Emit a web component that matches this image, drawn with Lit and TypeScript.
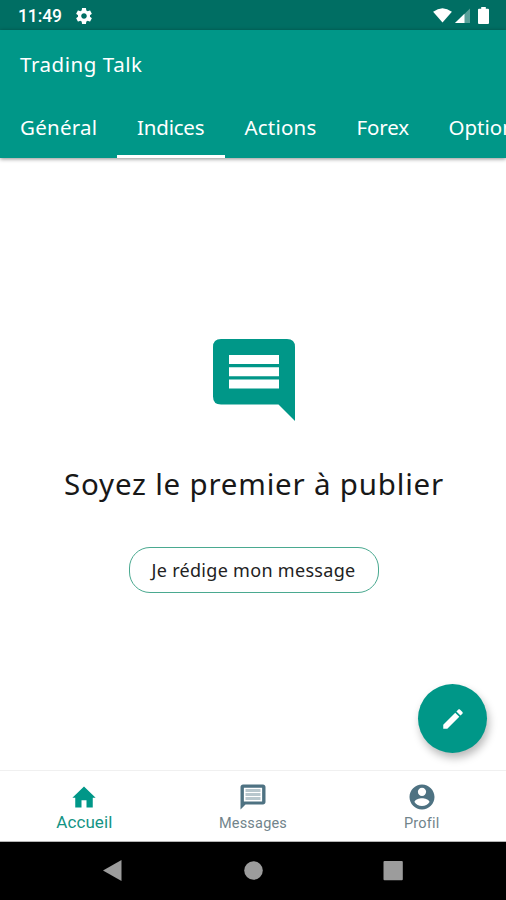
import { LitElement, html, css, svg } from "lit";
import { customElement, property, state } from "lit/decorators.js";
import { classMap } from "lit/directives/class-map.js";

@customElement("status-bar")
class StatusBar extends LitElement {
  static styles = css`
    :host { display: flex; align-items: center; height: 30px; box-sizing: border-box; padding: 1px 17px 0 18px; background: #006e63; color: #fff; font: 500 17.5px/28px Roboto, sans-serif; }
    .time { width: 58px; letter-spacing: -0.1px; }
    .fill { flex: 1; }
    svg { display: block; fill: #fff; }
    .gear { width: 16px; height: 16px; }
    .wifi { margin-right: 3px; }
    .signal { margin-right: 8px; }
  `;
  render() {
    return html`
      <span class="time">11:49</span>
      <svg class="gear" viewBox="2 2 20 20"><path d="M19.43 12.98c.04-.32.07-.64.07-.98s-.03-.66-.07-.98l2.11-1.65c.19-.15.24-.42.12-.64l-2-3.46c-.12-.22-.39-.3-.61-.22l-2.49 1c-.52-.4-1.08-.73-1.69-.98l-.38-2.65C14.46 2.18 14.25 2 14 2h-4c-.25 0-.46.18-.49.42l-.38 2.65c-.61.25-1.17.59-1.69.98l-2.49-1c-.23-.09-.49 0-.61.22l-2 3.46c-.13.22-.07.49.12.64l2.11 1.65c-.04.32-.07.65-.07.98s.03.66.07.98l-2.11 1.65c-.19.15-.24.42-.12.64l2 3.46c.12.22.39.3.61.22l2.49-1c.52.4 1.08.73 1.69.98l.38 2.65c.03.24.24.42.49.42h4c.25 0 .46-.18.49-.42l.38-2.65c.61-.25 1.17-.59 1.69-.98l2.49 1c.23.09.49 0 .61-.22l2-3.46c.12-.22.07-.49-.12-.64l-2.11-1.65zM12 15.500c-1.930 0-3.500-1.570-3.500-3.500s1.570-3.500 3.500-3.500 3.500 1.570 3.500 3.500-1.570 3.500-3.500 3.500z"/></svg>
      <span class="fill"></span>
      <svg class="wifi" width="19" height="15" viewBox="0 0 20 16"><path d="M0 4Q10-3.500 20 4L10 15.500Z"/></svg>
      <svg class="signal" width="15" height="15" viewBox="0 0 15 16" preserveAspectRatio="none"><path opacity=".35" d="M0 16 15 .5V16Z"/><path d="M0 16 9.500 6.200V16Z"/></svg>
      <svg width="11" height="17" viewBox="0 0 11 17"><path d="M3.200 0h4.600v1.800H10q1 0 1 1V16q0 1-1 1H1q-1 0-1-1V2.800q0-1 1-1h2.200Z"/></svg>
    `;
  }
}

@customElement("nav-item")
class NavItem extends LitElement {
  @property() icon = "home";
  @property() label = "";
  @property({ type: Boolean }) active = false;
  static styles = css`
    :host { flex: 1; }
    .item { display: flex; flex-direction: column; align-items: center; padding-top: 11px; color: #71848b; font: 400 14.5px/18px Roboto, sans-serif; letter-spacing: 0.2px; }
    .icon { display: block; width: 30px; height: 30px; fill: #4e7282; }
    .label { margin-top: 3px; }
    .active { color: #139484; font-size: 17px; letter-spacing: 0.1px; }
    .active .label { margin-top: 1px; }
    .active .icon { fill: #009788; }
  `;
  private shapes: Record<string, unknown> = {
    home: svg`<path d="M10 20.300v-5.800h4v5.800h5v-7.800h2.300L12 3.500 2.700 12.500H5v7.800z"/>`,
    chat: svg`<path fill-rule="evenodd" d="M4 2C2.900 2 2 2.900 2 4V22L6 18H20C21.100 18 22 17.100 22 16V4C22 2.900 21.100 2 20 2ZM4.700 4.500H19.300V15.500H4.700Z"/><path d="M6 5.500H18V7.900H6ZM6 8.700H18V11.100H6ZM6 11.900H18V14.300H6Z" opacity=".4"/>`,
    person: svg`<path d="M12 2C6.480 2 2 6.480 2 12s4.480 10 10 10 10-4.480 10-10S17.520 2 12 2zm0 2.500c1.800 0 3.300 1.500 3.300 3.300S13.800 11.200 12 11.200 8.700 9.700 8.700 7.800 10.200 4.500 12 4.500zm0 14.700c-2.500 0-4.710-1.280-6-3.220.03-1.990 4-3.080 6-3.080s5.970 1.090 6 3.080c-1.290 1.940-3.500 3.220-6 3.220z"/>`,
  };
  render() {
    return html`<div class=${classMap({ item: true, active: this.active })}>
      <svg class="icon" viewBox="0 0 24 24">${this.shapes[this.icon]}</svg>
      <span class="label">${this.label}</span>
    </div>`;
  }
}

@customElement("app-root")
class AppRoot extends LitElement {
  @state() private selected = 1;
  private tabs = [
    { label: "Général", cls: "general" },
    { label: "Indices", cls: "indices" },
    { label: "Actions", cls: "actions" },
    { label: "Forex", cls: "forex" },
    { label: "Options", cls: "options" },
  ];
  static styles = css`
    :host { display: flex; flex-direction: column; position: relative; width: 506px; height: 900px; overflow: hidden; background: #fff; font-family: "Noto Sans", sans-serif; }
    header { height: 128px; flex: none; background: #009788; color: #fff; box-shadow: 0 1px 4px rgba(0, 0, 0, 0.45); display: flex; flex-direction: column; z-index: 1; }
    .title { height: 68px; padding-left: 20px; font-size: 20.5px; line-height: 69px; letter-spacing: 0.55px; }
    .tabs { flex: 1; display: flex; overflow: hidden; }
    .tab { box-sizing: border-box; flex: none; padding-left: 20px; font-size: 20.5px; line-height: 59px; white-space: nowrap; border-bottom: 3px solid transparent; }
    .selected { border-bottom-color: #fff; }
    .general { width: 117px; letter-spacing: 0.25px; }
    .indices { width: 107.500px; letter-spacing: -0.2px; }
    .actions { width: 112px; letter-spacing: 0.2px; }
    .forex { width: 92px; letter-spacing: -0.1px; }
    main { flex: 1; display: flex; flex-direction: column; align-items: center; padding-top: 181px; }
    .bubble { display: block; width: 82px; height: 82px; margin-left: 1.500px; fill: #009788; }
    h1 { margin: 41px 0 0 2px; font-size: 29.5px; line-height: 44px; font-weight: 400; letter-spacing: 0.8px; color: #181818; white-space: nowrap; }
    .write { box-sizing: border-box; width: 250px; height: 46px; margin-top: 41px; margin-left: 1px; padding: 0; border: 1.500px solid #4aa990; border-radius: 21px; background: #fff; color: #222; font: 400 18px/42px "Noto Sans", sans-serif; letter-spacing: 0.3px; white-space: nowrap; }
    .fab { position: absolute; left: 418px; top: 684px; width: 69px; height: 69px; padding: 0; border: 0; border-radius: 50%; background: #009788; box-shadow: 2px 5px 9px rgba(0, 0, 0, 0.28); display: grid; place-items: center; }
    .fab svg { width: 26px; height: 26px; fill: #fff; }
    nav { flex: none; height: 72px; box-sizing: border-box; border-top: 1px solid #f0f0f0; border-bottom: 1px solid #b5b5b5; display: flex; background: #fff; }
    footer { flex: none; height: 58px; background: #000; display: flex; justify-content: center; gap: 120px; }
    footer svg { width: 20px; height: 58px; fill: #9c9c9c; overflow: visible; }
  `;
  render() {
    return html`
      <status-bar></status-bar>
      <header>
        <div class="title"><span>Trading Talk</span></div>
        <div class="tabs">
          ${this.tabs.map((t, i) => html`<div class=${classMap({ tab: true, [t.cls]: true, selected: i === this.selected })} @click=${() => (this.selected = i)}>${t.label}</div>`)}
        </div>
      </header>
      <main>
        <svg class="bubble" viewBox="0 0 82 82"><path fill-rule="evenodd" d="M8 0H74Q82 0 82 8V82L65.500 65.500H8Q0 65.500 0 57.500V8Q0 0 8 0ZM16 16V25H66V16ZM16 28.300V37.300H66V28.300ZM16 40.600V49.600H66V40.600Z"/></svg>
        <h1>Soyez le premier à publier</h1>
        <button class="write">Je rédige mon message</button>
      </main>
      <button class="fab"><svg viewBox="0 0 24 24"><path d="M3 17.250V21h3.750L17.810 9.940l-3.750-3.750L3 17.250zM20.710 7.040c.39-.39.39-1.020 0-1.410l-2.340-2.340c-.39-.39-1.020-.39-1.410 0l-1.830 1.830 3.750 3.750 1.830-1.830z"/></svg></button>
      <nav>
        <nav-item icon="home" label="Accueil" active></nav-item>
        <nav-item icon="chat" label="Messages"></nav-item>
        <nav-item icon="person" label="Profil"></nav-item>
      </nav>
      <footer>
        <svg viewBox="0 0 20 58"><path d="M0 28.500 18.500 18V39Z"/></svg>
        <svg viewBox="0 0 20 58"><circle cx="10.500" cy="28.500" r="9.300"/></svg>
        <svg viewBox="0 0 20 58"><rect x=".5" y="19" width="19.300" height="19.300" rx="1"/></svg>
      </footer>
    `;
  }
}
